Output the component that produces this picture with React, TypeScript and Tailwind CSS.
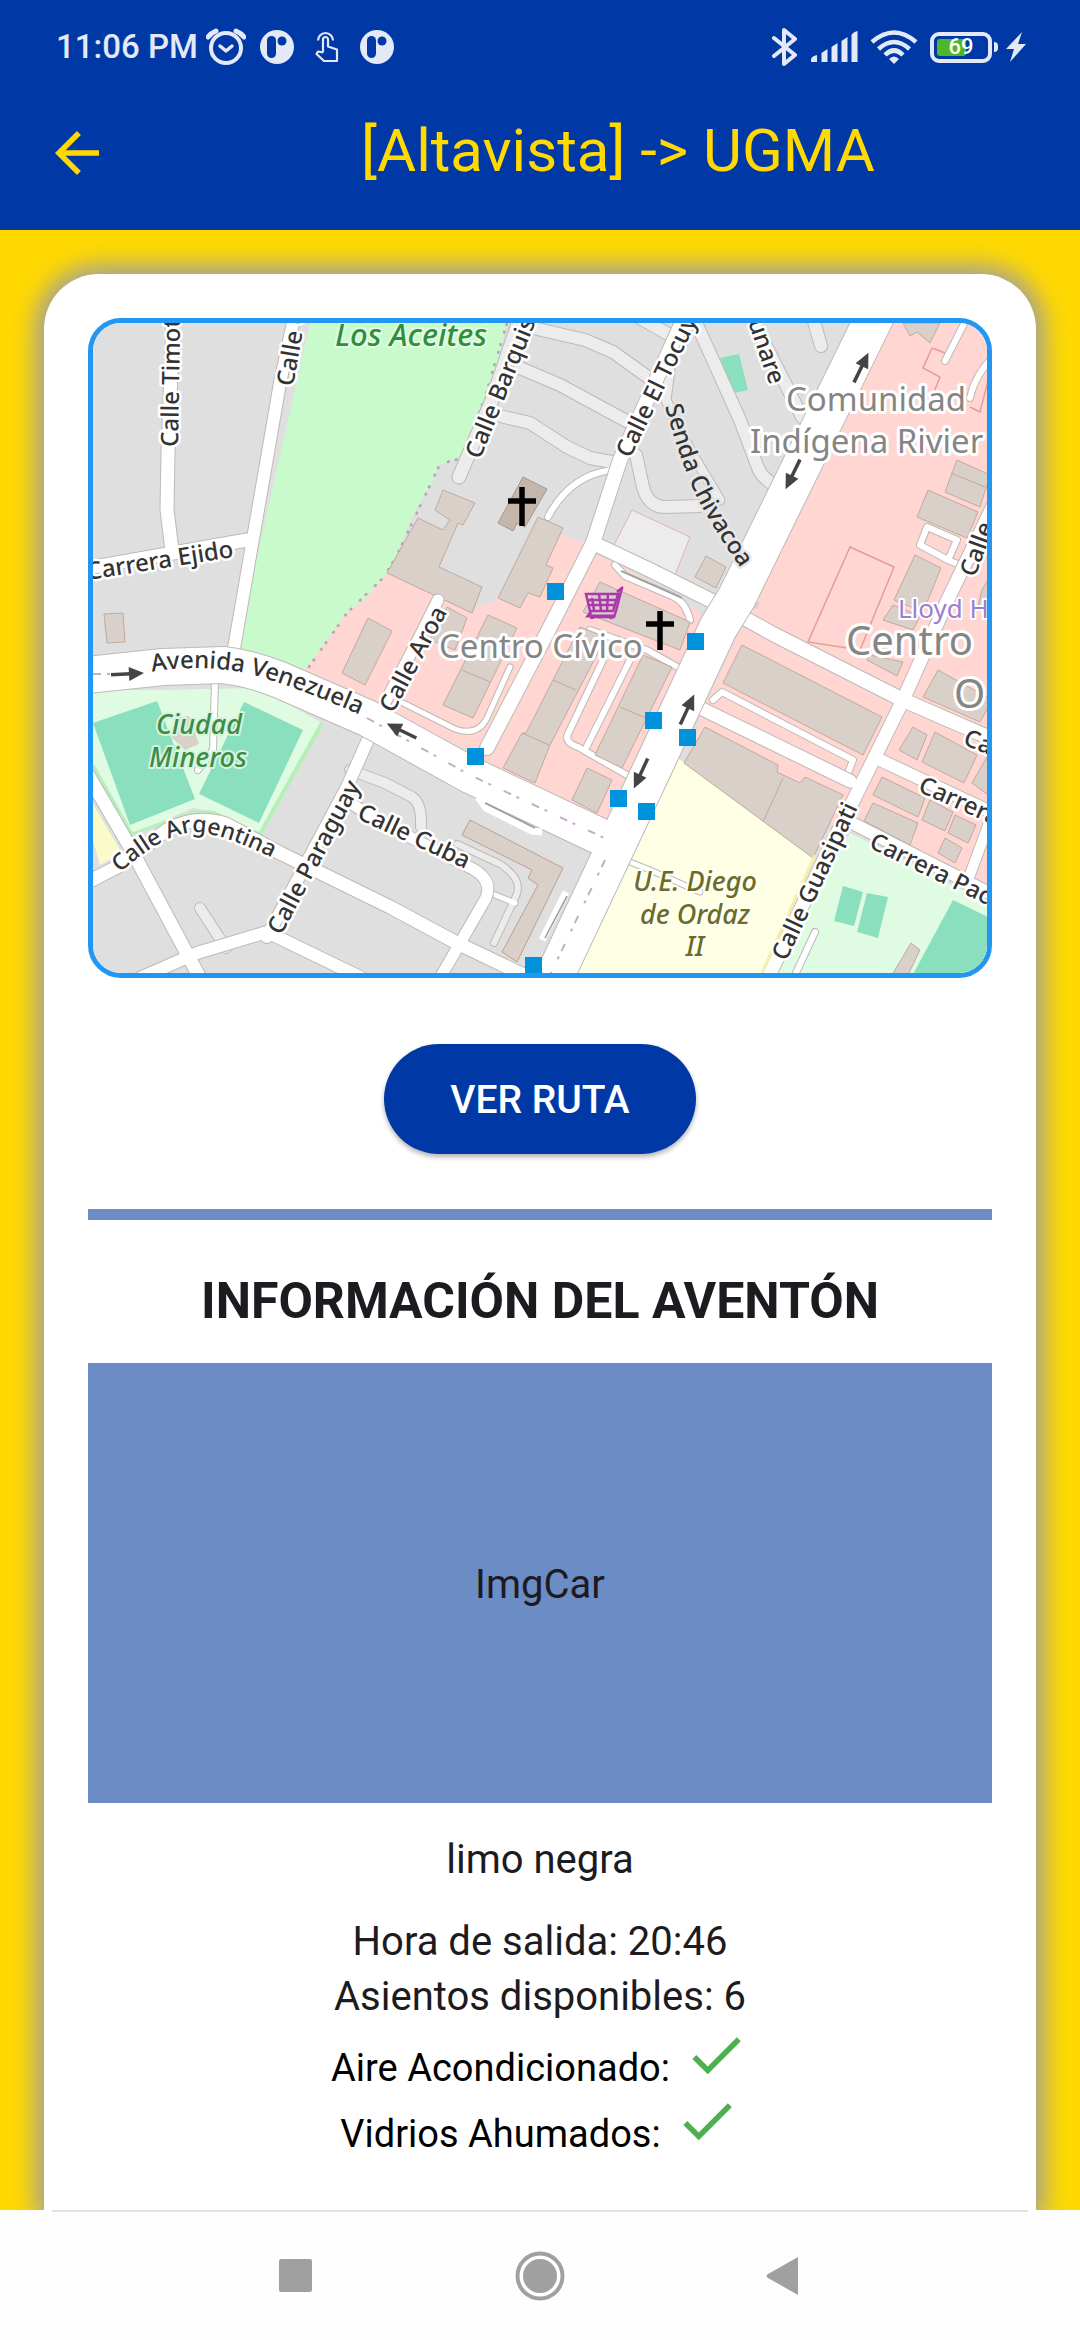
import React from "react";

const ROAD_CASING = "#bdbab8";

type RoadProps = { d: string; w?: number; light?: boolean };

const minorRoads: RoadProps[] = [
  { d: "M533 328L585 340L613 352L652 380", w: 12, light: true },
  { d: "M520 368L560 385L630 423", w: 12, light: true },
  { d: "M500 416L530 423L567 447L590 458L612 462", w: 12, light: true },
  { d: "M640 318L682 342", w: 12, light: true },
  { d: "M670 370L666 400L690 450L720 500", w: 9, light: true },
  { d: "M636 455L643 487Q648 506 664 507L700 506", w: 12, light: true },
  { d: "M459 477L492 400L520 318", w: 13, light: true },
  { d: "M694 318L740 420L758 468Q762 478 776 486", w: 12, light: true },
  { d: "M752 318L802 417", w: 12, light: true },
  { d: "M813 318L821 346", w: 12, light: true },
  { d: "M350 770L385 783L412 797Q422 803 421 827", w: 10, light: true },
  { d: "M200 908L226 948", w: 10, light: true },
  { d: "M612 470Q570 475 548 517", w: 6 },
  { d: "M403 703L455 729Q478 737 487 718L510 667", w: 5 },
  { d: "M457 844L500 864Q524 880 516 896L494 943", w: 6, light: true },
  { d: "M603 660L568 734Q564 742 578 747L627 775", w: 6 },
  { d: "M630 660L586 748", w: 6 },
  { d: "M590 630L647 650L690 674", w: 6 },
  { d: "M615 565L625 576L672 596Q686 602 690 620", w: 6 },
  { d: "M713 700L722 692L853 760L848 773", w: 6 },
  { d: "M927 527L957 540L948 560L920 545Z M948 560L962 566", w: 6 },
  { d: "M967 318L945 361", w: 6 },
  { d: "M990 360Q974 378 970 398", w: 6 },
  { d: "M815 932L796 973", w: 6 },
  { d: "M625 860L650 870L700 892", w: 5 },
  { d: "M490 893L515 903", w: 5 },
  { d: "M215 680L213 750L198 770", w: 6 },
];

const roads: RoadProps[] = [
  { d: "M173 318L168 453L167 510L172 550", w: 13 },
  { d: "M88 568L247 540", w: 13 },
  { d: "M294 318L280 383L232 660", w: 12 },
  { d: "M88 775L130 847L200 978", w: 13 },
  { d: "M88 882L117 867L167 830Q195 814 226 824L280 853L390 907L457 943L530 978", w: 13 },
  { d: "M370 735L347 787L267 937", w: 12 },
  { d: "M140 978L197 953L267 932L362 978", w: 12 },
  { d: "M349 802L380 822L467 866Q494 878 486 898L440 978", w: 11 },
  { d: "M438 600L418 640L380 712", w: 11 },
  { d: "M684 318L620 460L593 543L547 633L487 748", w: 14 },
  { d: "M593 543L650 570L730 610L773 634L903 700L995 740", w: 14 },
  { d: "M690 703L850 781", w: 13 },
  { d: "M995 502L950 595L903 700L860 787L823 862L768 978", w: 13 },
  { d: "M880 760L995 814", w: 12 },
  { d: "M852 823L995 896", w: 12 },
  { d: "M992 815L968 880", w: 10 },
];

const avenues: RoadProps[] = [
  { d: "M88 675L163 667L223 665Q250 668 280 680L367 718L470 775L597 835L613 843", w: 36 },
  { d: "M875 316L737 597L718 628L655 763L552 982", w: 38 },
];

function RoadLayer({ list }: { list: RoadProps[] }) {
  return (
    <g fill="none" strokeLinecap="round" strokeLinejoin="round">
      {list.map((r) => (
        <path key={"c" + r.d} d={r.d} stroke={ROAD_CASING} strokeWidth={(r.w ?? 12) + 2} />
      ))}
      {list.map((r) => (
        <path key={r.d} d={r.d} stroke={r.light ? "#ececec" : "#ffffff"} strokeWidth={r.w ?? 12} />
      ))}
    </g>
  );
}

function Buildings() {
  return (
    <g fill="#d9d0c9" stroke="#c0aa9d" strokeWidth="1">
      <path d="M443 490L475 503L463 525L458 523L439 567L482 587L472 613L387 573L418 518L443 530L450 520L435 510Z" />
      <path d="M523 477L547 489L525 527L517 523L513 531L498 523Z" fill="#c4b6ab" stroke="#a8968a" />
      <path d="M538 517L563 528L546 565L553 568L540 597L528 593L520 608L498 598Z" />
      <path d="M447 607L467 618L455 650L430 640Z" />
      <path d="M488 615L517 628L473 718L443 705Z M462 670L490 682" />
      <path d="M368 618L392 631L365 685L342 673Z" />
      <path d="M104 614L123 613L125 642L107 643Z" />
      <path d="M600 582L690 622L680 650L583 612Z" />
      <path d="M580 627L606 637L550 745L535 783L503 768L522 733L526 733Z M553 680L576 690M522 733L549 745" />
      <path d="M643 655L672 667L622 768L595 755Z M620 707L646 718" />
      <path d="M587 768L612 780L597 813L572 800Z" />
      <path d="M470 820L563 868L517 962L502 952L538 885L528 878L532 870L462 835Z" stroke="#c39d8b" />
      <path d="M706 556L726 567L716 588L695 577Z" />
      <path d="M903 323H940L930 343L917 332L910 336Z" />
      <path d="M957 460L990 475L980 507L945 492Z M951 473L985 487" />
      <path d="M928 490L978 512L967 538L917 517Z" />
      <path d="M915 555L941 568L923 612L894 600Z" />
      <path d="M893 605L920 616L913 630L883 620Z" />
      <path d="M992 572L982 590L978 606L992 612Z" />
      <path d="M742 645L882 717L863 755L723 683Z" />
      <path d="M705 727L778 765L777 772L800 783L805 777L843 795L813 858L684 763Z M783 778L763 822" />
      <path d="M870 655L903 662L897 676L867 660Z" />
      <path d="M938 670L992 700L980 722L923 697Z" />
      <path d="M913 727L927 735L917 760L899 750Z" />
      <path d="M935 732L977 755L964 783L922 762Z" />
      <path d="M987 757L995 762V800L972 783Z" />
      <path d="M882 777L925 798L918 817L873 795Z" />
      <path d="M873 803L918 823L910 845L864 821Z" />
      <path d="M930 800L953 812L945 831L922 820Z" />
      <path d="M955 815L976 825L968 843L948 833Z" />
      <path d="M945 838L962 848L955 863L938 853Z" />
      <path d="M911 943L920 950L908 975H892Z" />
      <path d="M175 718L189 716L199 744L185 750L172 738Z" stroke="none" />
      <path d="M750 600L760 603L757 609L748 606Z" stroke="none" />
    </g>
  );
}

function RoadArrow({ x, y, angle }: { x: number; y: number; angle: number }) {
  return (
    <g transform={`translate(${x} ${y}) rotate(${angle})`} fill="#444" stroke="#444">
      <path d="M-16 0H4" strokeWidth="3.500" />
      <path d="M2 -7L17 0L2 7Z" stroke="none" />
    </g>
  );
}

const roadLabels = [
  { t: "Calle Timot", x: 178, y: 447, a: -89 },
  { t: "Calle C", x: 293, y: 387, a: -80 },
  { t: "Carrera Ejido", x: 88, y: 580, a: -9 },
  { t: "Calle Barquis", x: 480, y: 460, a: -68 },
  { t: "Calle El Tocuyo", x: 630, y: 459, a: -64 },
  { t: "unare", x: 748, y: 322, a: 71 },
  { t: "Calle Aroa", x: 393, y: 714, a: -62 },
  { t: "Calle", x: 975, y: 578, a: -70 },
  { t: "Calle Paraguay", x: 281, y: 936, a: -62 },
  { t: "Calle Cuba", x: 356, y: 818, a: 25 },
  { t: "Calle Guasipati", x: 786, y: 962, a: -65 },
  { t: "Carrera", x: 917, y: 791, a: 24 },
  { t: "Ca", x: 962, y: 744, a: 22 },
  { t: "Carrera Pac", x: 868, y: 847, a: 26 },
];

function StreetMap() {
  return (
    <svg
      viewBox="93 323 894 650"
      preserveAspectRatio="xMidYMid slice"
      className="block h-full w-full"
      role="img"
      aria-label="Mapa de Centro Cívico"
    >
      <rect x="93" y="323" width="894" height="650" fill="#dfdfdf" />

      <path d="M310 323H507L497 363L483 400L462 458L440 464L432 483L413 515L397 555L384 577L367 597L347 613L320 650L304 674L272 660L236 650Z" fill="#c8facc" />
      <path d="M384 577L387 573L472 613L477 607L497 600L540 517L563 535L590 545L483 757L373 705L303 672L320 650L347 613L367 597Z" fill="#ffd6d1" />
      <path d="M595 555L615 562L700 612L706 650L606 820L484 762Z" fill="#ffd6d1" />
      <path d="M885 323H990V900L848 828L760 800L690 770L700 715Z" fill="#ffd6d1" />
      <path d="M676 757L815 857L762 980H570L627 867Z" fill="#ffffe5" />
      <path d="M850 833L992 905V980H770Z" fill="#dffce2" />
      <path d="M953 900L992 919V980H910Z" fill="#8adfbe" />
      <path d="M843 886L863 892L854 926L834 921Z M867 893L888 897L878 938L857 932Z" fill="#8adfbe" />
      <path d="M720 358L739 354L748 390L734 393Z" fill="#8adfbe" />
      <path d="M93 690H163L260 688L322 723L260 834L213 812L193 808L132 834L93 765Z" fill="#dffce2" />
      <path d="M322 723L260 834" stroke="#b5f0b8" strokeWidth="4" />
      <path d="M260 834L213 812H193L132 834L93 765" stroke="#b5f0b8" strokeWidth="3" fill="none" />
      <path d="M93 723L157 701L195 799L130 825Z M244 702L303 730L259 823L199 794Z" fill="#8adfbe" />
      <path d="M93 804L122 853L100 865L93 840Z" fill="#fbfbc9" />
      <path d="M632 510L690 537L675 575L613 547Z" fill="#ececec" stroke="#e0b5b0" />
      <path d="M507 323L484 400L462 458L440 464L397 555L384 577L347 613L304 674" fill="none" stroke="#b9a0b9" strokeWidth="2.5" strokeDasharray="3 5 3 10" />
      <path d="M850 547L894 567L860 650L808 642Z M932 348L945 353M932 348L923 368L940 377L934 392M992 365L980 412L970 407" fill="none" stroke="#e39c9c" strokeWidth="1.5" />

      <RoadLayer list={minorRoads} />
      <Buildings />
      <RoadLayer list={roads} />
      <RoadLayer list={avenues} />

      {/* Lay-bys next to the avenues */}
      <g fill="none" stroke="#ffffff" strokeWidth="7" strokeLinejoin="round">
        <path d="M478 797L486 808L532 831L542 832" />
        <path d="M566 892L542 940" />
      </g>
      <path d="M485 803L535 828M567 896L545 938M621 571L682 598" stroke="#999" strokeWidth="1.5" />
      <g fill="none" stroke="#c9a9c9" strokeWidth="2" strokeDasharray="8 6 3 14">
        <path d="M93 674H130M367 718L470 775L615 843" />
        <path d="M605 860L550 975" />
      </g>
      <path d="M815 855L762 973" stroke="#f4f0a8" strokeWidth="3" />

      <RoadArrow x={127} y={674} angle={-3} />
      <RoadArrow x={402} y={731} angle={206} />
      <RoadArrow x={861} y={368} angle={-64} />
      <RoadArrow x={793} y={474} angle={116} />
      <RoadArrow x={687} y={710} angle={-65} />
      <RoadArrow x={641} y={773} angle={115} />

      {/* Places of worship */}
      <path d="M522 487V526M508 501H536M660 611V650M646 624H674" stroke="#000" strokeWidth="5.5" />

      {/* Supermarket */}
      <g fill="none" stroke="#ac39ac" strokeWidth="2.5">
        <path d="M586 594H618L613 611H590Z M622 588L616 611L614 617H590M592 598L594 610M599 594L601 610M608 594L607 610M588 600H616M589 605H615M623 587L617 592" />
        <path d="M591 612L588 616H614" strokeWidth="3" />
        <circle cx="592" cy="617" r="1" />
        <circle cx="611" cy="617" r="1" />
      </g>

      <defs>
        <path id="avenida" d="M152 672Q195 664 240 672Q290 682 410 737" />
        <path id="argentina" d="M120 873Q160 836 193 832Q225 832 300 872" />
        <path id="senda" d="M665 406Q680 460 694 491Q712 530 765 602" />
      </defs>
      <g
        fontFamily="'Noto Sans', sans-serif"
        strokeLinejoin="round"
        style={{ paintOrder: "stroke" }}
      >
        <g fontSize="24" fontWeight="500" fill="#333" stroke="#fff" strokeWidth="5">
          {roadLabels.map((l) => (
            <text key={`${l.x}-${l.y}`} x={l.x} y={l.y} transform={`rotate(${l.a} ${l.x} ${l.y})`}>
              {l.t}
            </text>
          ))}
          <text>
            <textPath href="#avenida">Avenida Venezuela</textPath>
          </text>
          <text fontSize="23">
            <textPath href="#argentina">Calle Argentina</textPath>
          </text>
          <text stroke="#e6e6e6">
            <textPath href="#senda">Senda Chivacoa</textPath>
          </text>
        </g>
        <g fontStyle="italic" fontWeight="500" strokeWidth="4" textAnchor="middle">
          <text x="411" y="346" fontSize="31" fill="#2f8f3b" stroke="#e4fbe6">Los Aceites</text>
          <g fontSize="27" fill="#3d8b45" stroke="#d5f5df">
            <text x="199" y="734">Ciudad</text>
            <text x="198" y="767">Mineros</text>
          </g>
          <g fontSize="27" fill="#6b6b2a" stroke="#fffff2">
            <text x="695" y="891">U.E. Diego</text>
            <text x="695" y="924">de Ordaz</text>
            <text x="695" y="956">II</text>
          </g>
        </g>
        <g fill="#858585" stroke="#fff" strokeWidth="6">
          <g fontSize="33">
            <text x="786" y="411">Comunidad</text>
            <text x="750" y="453">Indígena Rivier</text>
            <text x="439" y="658">Centro Cívico</text>
          </g>
          <g fontSize="40">
            <text x="846" y="655">Centro</text>
            <text x="954" y="708">O</text>
          </g>
          <text x="898" y="618" fontSize="26" fill="#9b7fd0" strokeWidth="4">Lloyd H</text>
        </g>
      </g>

      {/* Bus stops */}
      <g fill="#0092da">
        {[
          [547, 583],
          [687, 633],
          [645, 712],
          [679, 729],
          [467, 748],
          [610, 790],
          [638, 803],
          [525, 957],
        ].map(([x, y]) => (
          <rect key={`${x}-${y}`} x={x} y={y} width="17" height="17" />
        ))}
      </g>
    </svg>
  );
}

function AppBadge() {
  return (
    <svg viewBox="0 0 34 34" className="size-[34px]" aria-hidden="true">
      <circle cx="17" cy="17" r="17" fill="#e3e9f7" />
      <rect x="7" y="6" width="9" height="22" rx="4.5" fill="#0039a6" />
      <circle cx="22" cy="11" r="4.5" fill="#0039a6" />
    </svg>
  );
}

function StatusBar() {
  return (
    <div className="flex h-[76px] items-center justify-between pt-[18px] pr-[54px] pl-[56px] text-[#e3e9f7]">
      <div className="flex items-center">
        <span className="text-[33px] leading-10 font-medium">11:06 PM</span>
        <svg viewBox="0 0 40 38" className="ml-2 h-[38px] w-10" fill="none" stroke="currentColor" aria-hidden="true">
          <circle cx="20" cy="20" r="15" strokeWidth="4" />
          <path d="M14 18L20 23L26 18" strokeWidth="3.5" strokeLinecap="round" strokeLinejoin="round" />
          <path d="M2 9Q5 5 10 3M38 9Q35 5 30 3" strokeWidth="5" strokeLinecap="round" />
        </svg>
        <div className="ml-3.5 flex items-center gap-[21px]">
          <AppBadge />
          <svg viewBox="0 0 24 32" className="h-8 w-6" fill="none" stroke="currentColor" strokeWidth="2.2" aria-hidden="true">
            <path d="M3 9.500A7.500 7.500 0 1 1 18 9.500" />
            <path d="M8 21.500V8.500a2.500 2.500 0 0 1 5 0V15.500L22 18.500V30H9L1.500 23L3 20.500L8 21.500" strokeLinejoin="round" />
          </svg>
          <AppBadge />
        </div>
      </div>
      <div className="flex items-center">
        <svg viewBox="0 0 26 40" className="h-10 w-[26px]" fill="none" stroke="currentColor" strokeWidth="4" aria-hidden="true">
          <path d="M2 11L23 28L12 37V3L23 12L2 29" strokeLinejoin="round" strokeLinecap="round" />
        </svg>
        <svg viewBox="0 0 48 32" className="ml-3 h-8 w-12" fill="currentColor" aria-hidden="true">
          <path d="M1 28Q2 25 7 24V31H1ZM11.500 22L17.500 18V31H11.500ZM21.500 16L27.500 12V31H21.500ZM31.500 10L37.500 6V31H31.500ZM41.500 4Q43 1 47.500 0V31H41.500Z" />
        </svg>
        <svg viewBox="0 0 48 34" className="ml-3 h-[34px] w-12" fill="none" stroke="currentColor" strokeWidth="4.500" aria-hidden="true">
          <path d="M2 12Q24 -7 46 12M8.500 19Q24 5 39.500 19M15 25Q24 16 33 25" />
          <path d="M19 29Q24 24 29 29L24 34Z" fill="currentColor" stroke="none" />
        </svg>
        <div className="ml-3 flex items-center">
          <div className="relative h-[31px] w-[62px] rounded-[9px] border-4 border-current p-[3px]">
            <div className="h-full w-[29px] rounded-[3px] bg-[#4cb829]" />
            <span className="absolute inset-0 flex items-center justify-center text-[22px] leading-6 font-medium text-white">
              69
            </span>
          </div>
          <div className="ml-0.5 h-[10px] w-1 rounded-r-sm bg-current" />
        </div>
        <svg viewBox="0 0 20 30" className="ml-2 h-[30px] w-5" fill="currentColor" aria-hidden="true">
          <path d="M16 0L0 17H8L4 30L20 12H12Z" />
        </svg>
      </div>
    </div>
  );
}

function Feature({ label }: { label: string }) {
  return (
    <li className="flex items-end justify-center gap-[13px]">
      <span className="text-[38px] leading-10 text-black">{label}</span>
      <svg viewBox="0 0 24 24" className="size-[66px]" fill="#4caf50" role="img" aria-label="Sí">
        <path d="M9 16.170L4.830 12l-1.420 1.410L9 19 21 7l-1.410-1.410z" />
      </svg>
    </li>
  );
}

export default function App() {
  return (
    <div className="flex h-screen flex-col bg-[#ffd900] font-[Roboto,sans-serif] text-[#1d1b20]">
      <header className="shrink-0 bg-[#0039a6]">
        <StatusBar />
        <div className="flex h-[154px] items-center pl-11 text-[#ffd900]">
          <button type="button" aria-label="Volver" className="size-[66px]">
            <svg viewBox="0 0 24 24" className="size-full" fill="currentColor" aria-hidden="true">
              <path d="M20 11H7.830l5.590-5.590L12 4l-8 8 8 8 1.410-1.410L7.830 13H20v-2z" />
            </svg>
          </button>
          <h1 className="ml-[46px] flex-1 pb-1 text-center text-[60px] leading-[72px]">[Altavista] -&gt; UGMA</h1>
        </div>
      </header>

      <main className="flex min-h-0 flex-1 flex-col overflow-hidden px-11 pt-11">
        <section className="flex flex-1 flex-col items-center rounded-t-[55px] bg-white px-11 pt-11 shadow-[0_0_24px_8px_#9e9e9e]">
          <div className="h-[660px] w-full shrink-0 overflow-hidden rounded-[33px] border-[5px] border-[#2196f3]">
            <StreetMap />
          </div>
          <button
            type="button"
            className="mt-[66px] h-[110px] shrink-0 rounded-full bg-[#0039a6] px-[66px] pt-0.5 text-[39px] leading-[44px] font-medium text-white shadow-[0_3px_5px_rgba(0,0,0,0.3)]"
          >
            VER RUTA
          </button>
          <hr className="mt-[55px] h-[11px] w-full shrink-0 border-0 bg-[#6c8cc5]" />
          <h2 className="mt-12 text-[50px] leading-[66px] font-bold">INFORMACIÓN DEL AVENTÓN</h2>
          <div className="mt-[29px] flex h-[440px] w-full shrink-0 items-center justify-center bg-[#6c8cc5] pt-1 text-[40px]">
            ImgCar
          </div>
          <p className="mt-[29px] text-[40px] leading-[55px]">limo negra</p>
          <div className="mt-[27px] text-center text-[40px] leading-[55px]">
            <p>Hora de salida: 20:46</p>
            <p>Asientos disponibles: 6</p>
          </div>
          <ul className="-mt-0.5">
            <Feature label="Aire Acondicionado:" />
            <Feature label="Vidrios Ahumados:" />
          </ul>
        </section>
      </main>

      <nav className="h-[130px] shrink-0 bg-[#fefefe]">
        <div className="mx-[52px] h-0.5 bg-[#e2e2e2]" />
        <div className="flex h-32 items-center justify-center gap-[197px] text-[#a0a0a0]">
          <button type="button" aria-label="Recientes" className="size-11">
            <svg viewBox="0 0 44 44" fill="currentColor" aria-hidden="true">
              <rect x="5" y="5" width="33" height="33" rx="2" />
            </svg>
          </button>
          <button type="button" aria-label="Inicio" className="size-[50px]">
            <svg viewBox="0 0 50 50" aria-hidden="true">
              <circle cx="25" cy="25" r="22.500" fill="none" stroke="currentColor" strokeWidth="4" />
              <circle cx="25" cy="25" r="17" fill="currentColor" />
            </svg>
          </button>
          <button type="button" aria-label="Atrás" className="size-11">
            <svg viewBox="0 0 44 44" fill="currentColor" aria-hidden="true">
              <path d="M36 3V41L6 24Q3 22 6 20Z" />
            </svg>
          </button>
        </div>
      </nav>
    </div>
  );
}
